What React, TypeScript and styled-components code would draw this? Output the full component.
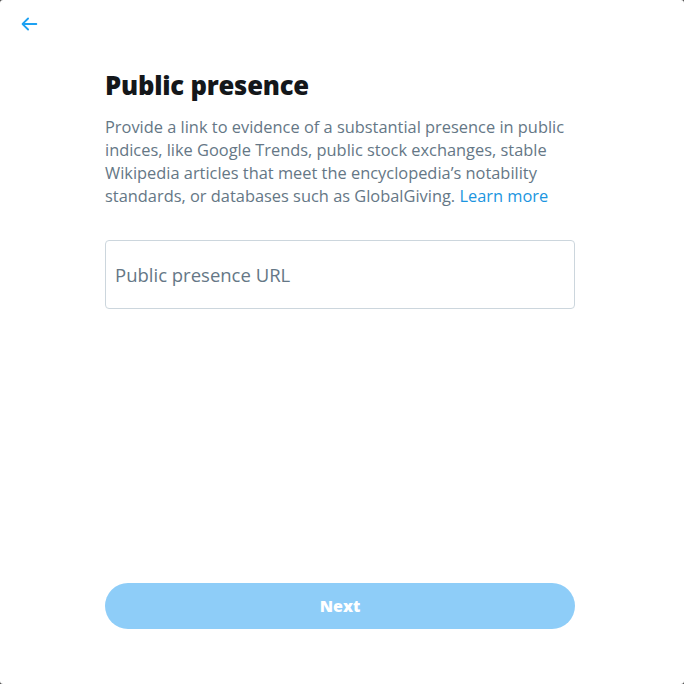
import React from "react";
import styled, { createGlobalStyle } from "styled-components";

const Global = createGlobalStyle`
  html, body { margin: 0; padding: 0; background: #4a4a4a; }
  * { box-sizing: border-box; }
`;

const Modal = styled.div`
  width: 684px;
  height: 684px;
  background: #ffffff;
  border-radius: 3px;
  display: flex;
  flex-direction: column;
  font-family: "Open Sans", "Noto Sans", sans-serif;
  overflow: hidden;
`;

const Header = styled.div`
  height: 47px;
  display: flex;
  align-items: center;
  padding-left: 17px;
`;

const BackButton = styled.button`
  border: none;
  background: none;
  padding: 0;
  width: 24px;
  height: 24px;
  display: flex;
  align-items: center;
  justify-content: center;
  color: #1da1f2;
  cursor: pointer;
`;

const Body = styled.div`
  flex: 1;
  display: flex;
  flex-direction: column;
  padding: 24px 109px 0 105px;
`;

const Title = styled.h1`
  margin: 0;
  font-size: 25.6px;
  font-weight: 800;
  color: #14171a;
  line-height: 30px;
  letter-spacing: -0.2px;
`;

const Description = styled.p`
  margin: 14px 0 0 0;
  font-size: 16.4px;
  line-height: 23px;
  color: #657786;
`;

const Link = styled.a`
  color: #1b95e0;
  text-decoration: none;
`;

const Field = styled.div`
  margin-top: 33px;
  height: 69px;
  border: 1px solid #ccd6dd;
  border-radius: 4px;
  display: flex;
  align-items: center;
  padding: 0 8px;
`;

const Input = styled.input`
  border: none;
  outline: none;
  width: 100%;
  padding: 0 1px;
  font-family: inherit;
  font-size: 18.5px;
  color: #14171a;
  background: transparent;
  &::placeholder { color: #657786; }
`;

const Footer = styled.div`
  padding: 0 109px 55px 105px;
`;

const NextButton = styled.button`
  width: 100%;
  height: 46px;
  border: none;
  border-radius: 9999px;
  background: #8ecdf8;
  color: #ffffff;
  font-family: inherit;
  font-size: 16px;
  font-weight: 800;
`;

export default function App() {
  return (
    <>
      <Global />
      <Modal>
        <Header>
          <BackButton aria-label="Back">
            <svg width="22" height="22" viewBox="0 0 24 24" fill="currentColor">
              <path d="M20 11H7.414l4.293-4.293a1 1 0 0 0-1.414-1.414l-6 6a1 1 0 0 0 0 1.414l6 6a.996.996 0 0 0 1.414 0 1 1 0 0 0 0-1.414L7.414 13H20a1 1 0 1 0 0-2z" />
            </svg>
          </BackButton>
        </Header>
        <Body>
          <Title>Public presence</Title>
          <Description>
            Provide a link to evidence of a substantial presence in public indices, like Google Trends, public stock exchanges, stable Wikipedia articles that meet the encyclopedia’s notability standards, or databases such as GlobalGiving. <Link href="#">Learn more</Link>
          </Description>
          <Field>
            <Input placeholder="Public presence URL" />
          </Field>
        </Body>
        <Footer>
          <NextButton disabled>Next</NextButton>
        </Footer>
      </Modal>
    </>
  );
}
